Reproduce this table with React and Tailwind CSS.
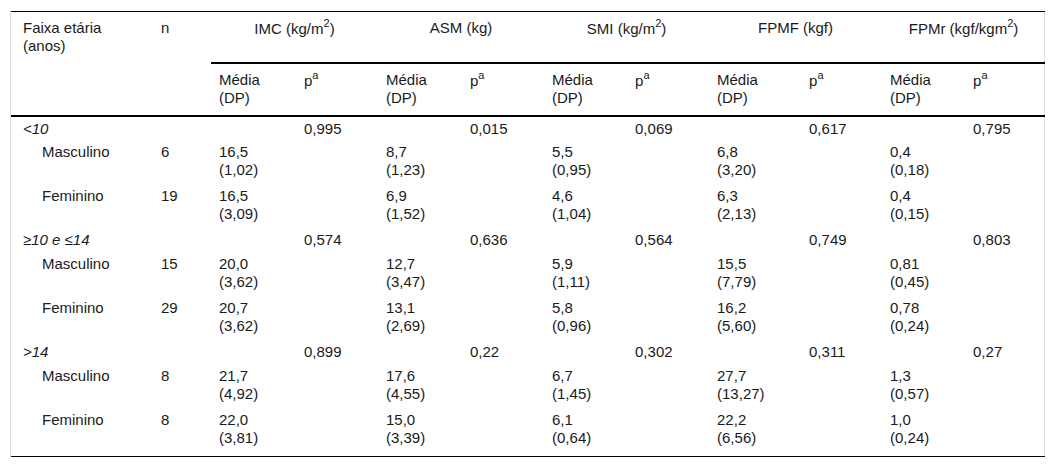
import React from "react";

const groups = [
  { label: "IMC (kg/m", sup: "2", after: ")" },
  { label: "ASM (kg)" },
  { label: "SMI (kg/m", sup: "2", after: ")" },
  { label: "FPMF (kgf)" },
  { label: "FPMr (kgf/kgm", sup: "2", after: ")" },
];

const widths = [142, 58, 85, 82, 84, 82, 83, 82, 92, 81, 83, 80];

const sections = [
  {
    label: "<10",
    p: ["0,995", "0,015", "0,069", "0,617", "0,795"],
    rows: [
      { sex: "Masculino", n: "6", v: [["16,5", "(1,02)"], ["8,7", "(1,23)"], ["5,5", "(0,95)"], ["6,8", "(3,20)"], ["0,4", "(0,18)"]] },
      { sex: "Feminino", n: "19", v: [["16,5", "(3,09)"], ["6,9", "(1,52)"], ["4,6", "(1,04)"], ["6,3", "(2,13)"], ["0,4", "(0,15)"]] },
    ],
  },
  {
    label: "≥10 e ≤14",
    p: ["0,574", "0,636", "0,564", "0,749", "0,803"],
    rows: [
      { sex: "Masculino", n: "15", v: [["20,0", "(3,62)"], ["12,7", "(3,47)"], ["5,9", "(1,11)"], ["15,5", "(7,79)"], ["0,81", "(0,45)"]] },
      { sex: "Feminino", n: "29", v: [["20,7", "(3,62)"], ["13,1", "(2,69)"], ["5,8", "(0,96)"], ["16,2", "(5,60)"], ["0,78", "(0,24)"]] },
    ],
  },
  {
    label: ">14",
    p: ["0,899", "0,22", "0,302", "0,311", "0,27"],
    rows: [
      { sex: "Masculino", n: "8", v: [["21,7", "(4,92)"], ["17,6", "(4,55)"], ["6,7", "(1,45)"], ["27,7", "(13,27)"], ["1,3", "(0,57)"]] },
      { sex: "Feminino", n: "8", v: [["22,0", "(3,81)"], ["15,0", "(3,39)"], ["6,1", "(0,64)"], ["22,2", "(6,56)"], ["1,0", "(0,24)"]] },
    ],
  },
];

function Sup({ children }) {
  return <sup className="relative top-[-1px] text-[11px] leading-none align-super">{children}</sup>;
}

export default function App() {
  return (
    <div className="min-h-[468px] bg-white pt-[11px] pl-[10px] text-[#1a1a1a]" style={{ fontFamily: '"Liberation Sans", Arial, sans-serif' }}>
      <div className="w-[1035px] border-x border-[#dedede]">
        <table className="w-[1034px] table-fixed border-collapse text-[15px] leading-[18px]">
          <colgroup>
            {widths.map((w, i) => (
              <col key={i} style={{ width: w }} />
            ))}
          </colgroup>
          <thead>
            <tr className="h-[51px] border-t border-black">
              <th rowSpan={2} className="pl-[12px] pt-[7px] text-left align-top font-normal">
                Faixa etária
                <br />
                (anos)
              </th>
              <th rowSpan={2} className="pl-[8px] pt-[7px] text-left align-top font-normal">
                n
              </th>
              {groups.map((g, i) => (
                <th key={i} colSpan={2} className="border-b-2 border-black pt-[7px] text-center align-top font-normal">
                  {g.label}
                  {g.sup && <Sup>{g.sup}</Sup>}
                  {g.after}
                </th>
              ))}
            </tr>
            <tr className="h-[53px] border-b-2 border-black">
              {groups.map((g, i) => (
                <React.Fragment key={i}>
                  <th className="pl-[8px] pt-[7px] text-left align-top font-normal">
                    Média
                    <br />
                    (DP)
                  </th>
                  <th className="pl-[8px] pt-[7px] text-left align-top font-normal">
                    p<Sup>a</Sup>
                  </th>
                </React.Fragment>
              ))}
            </tr>
          </thead>
          <tbody>
            {sections.map((s, si) => (
              <React.Fragment key={si}>
                <tr className="h-[24px]">
                  <td className="pl-[12px] pt-[3px] align-top italic">{s.label}</td>
                  <td></td>
                  {s.p.map((p, i) => (
                    <React.Fragment key={i}>
                      <td></td>
                      <td className="pl-[8px] pt-[3px] align-top">{p}</td>
                    </React.Fragment>
                  ))}
                </tr>
                {s.rows.map((r, ri) => (
                  <tr key={ri} className="h-[44px]">
                    <td className="pl-[31px] pt-[3px] align-top">{r.sex}</td>
                    <td className="pl-[8px] pt-[3px] align-top">{r.n}</td>
                    {r.v.map((v, i) => (
                      <React.Fragment key={i}>
                        <td className="pl-[8px] pt-[3px] align-top">
                          {v[0]}
                          <br />
                          {v[1]}
                        </td>
                        <td></td>
                      </React.Fragment>
                    ))}
                  </tr>
                ))}
              </React.Fragment>
            ))}
            <tr className="h-[5px] border-b border-black">
              <td colSpan={12}></td>
            </tr>
          </tbody>
        </table>
      </div>
    </div>
  );
}
